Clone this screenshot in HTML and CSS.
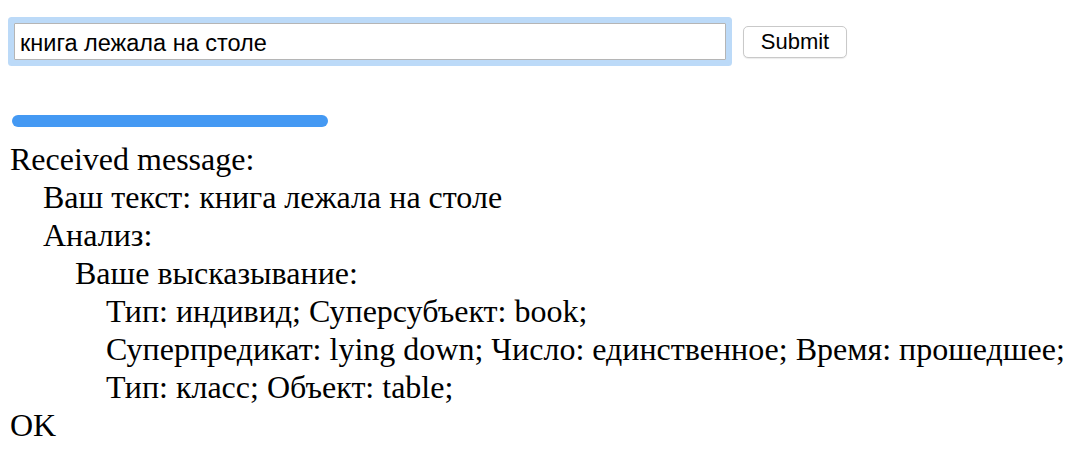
FILE: index.html
```html
<!DOCTYPE html>
<html>
<head>
<meta charset="utf-8">
<link rel="stylesheet" href="styles.css">
</head>
<body>
<form class="form">
  <input class="query" type="text" value="книга лежала на столе">
  <button class="submit" type="button">Submit</button>
</form>
<div class="progress"></div>
<div class="output">
  <div>Received message:</div>
  <div class="lvl1">Ваш текст: книга лежала на столе</div>
  <div class="lvl1">Анализ:</div>
  <div class="lvl2">Ваше высказывание:</div>
  <div class="lvl3">Тип: индивид; Суперсубъект: book;</div>
  <div class="lvl3">Суперпредикат: lying down; Число: единственное; Время: прошедшее;</div>
  <div class="lvl3">Тип: класс; Объект: table;</div>
  <div>OK</div>
</div>
</body>
</html>
```
FILE: styles.css
```css
html, body {
  background: #ffffff;
}
body {
  margin: 8px;
  font-family: "Liberation Serif", "Times New Roman", serif;
  color: #000;
}
.form {
  display: flex;
  align-items: center;
  margin: 15px 0 0 6px;
}
.query {
  box-sizing: border-box;
  width: 712px;
  height: 37px;
  margin: 0;
  padding: 4px 5px 0 5px;
  border: 1px solid #b5b5b5;
  border-radius: 1px;
  box-shadow: 0 0 0 6px #bcdaf8;
  outline: none;
  font-family: "Liberation Sans", Arial, sans-serif;
  font-size: 23.5px;
  color: #000;
  background: #fff;
}
.submit {
  box-sizing: border-box;
  margin-left: 17px;
  width: 104px;
  height: 32px;
  padding: 0;
  border: 1px solid #c9c9c9;
  border-radius: 5px;
  background: #ffffff;
  box-shadow: 0 1px 1px rgba(0,0,0,0.08);
  font-family: "Liberation Sans", Arial, sans-serif;
  font-size: 22px;
  color: #000;
}
.progress {
  width: 316px;
  height: 12px;
  margin: 55px 0 0 4px;
  border-radius: 6px;
  background: #4499f3;
}
.output {
  margin-top: 13px;
  font-size: 32px;
  line-height: 38px;
  margin-left: 2px;
}
.lvl1 { padding-left: 33px; }
.lvl2 { padding-left: 65px; }
.lvl3 { padding-left: 96px; }
```
